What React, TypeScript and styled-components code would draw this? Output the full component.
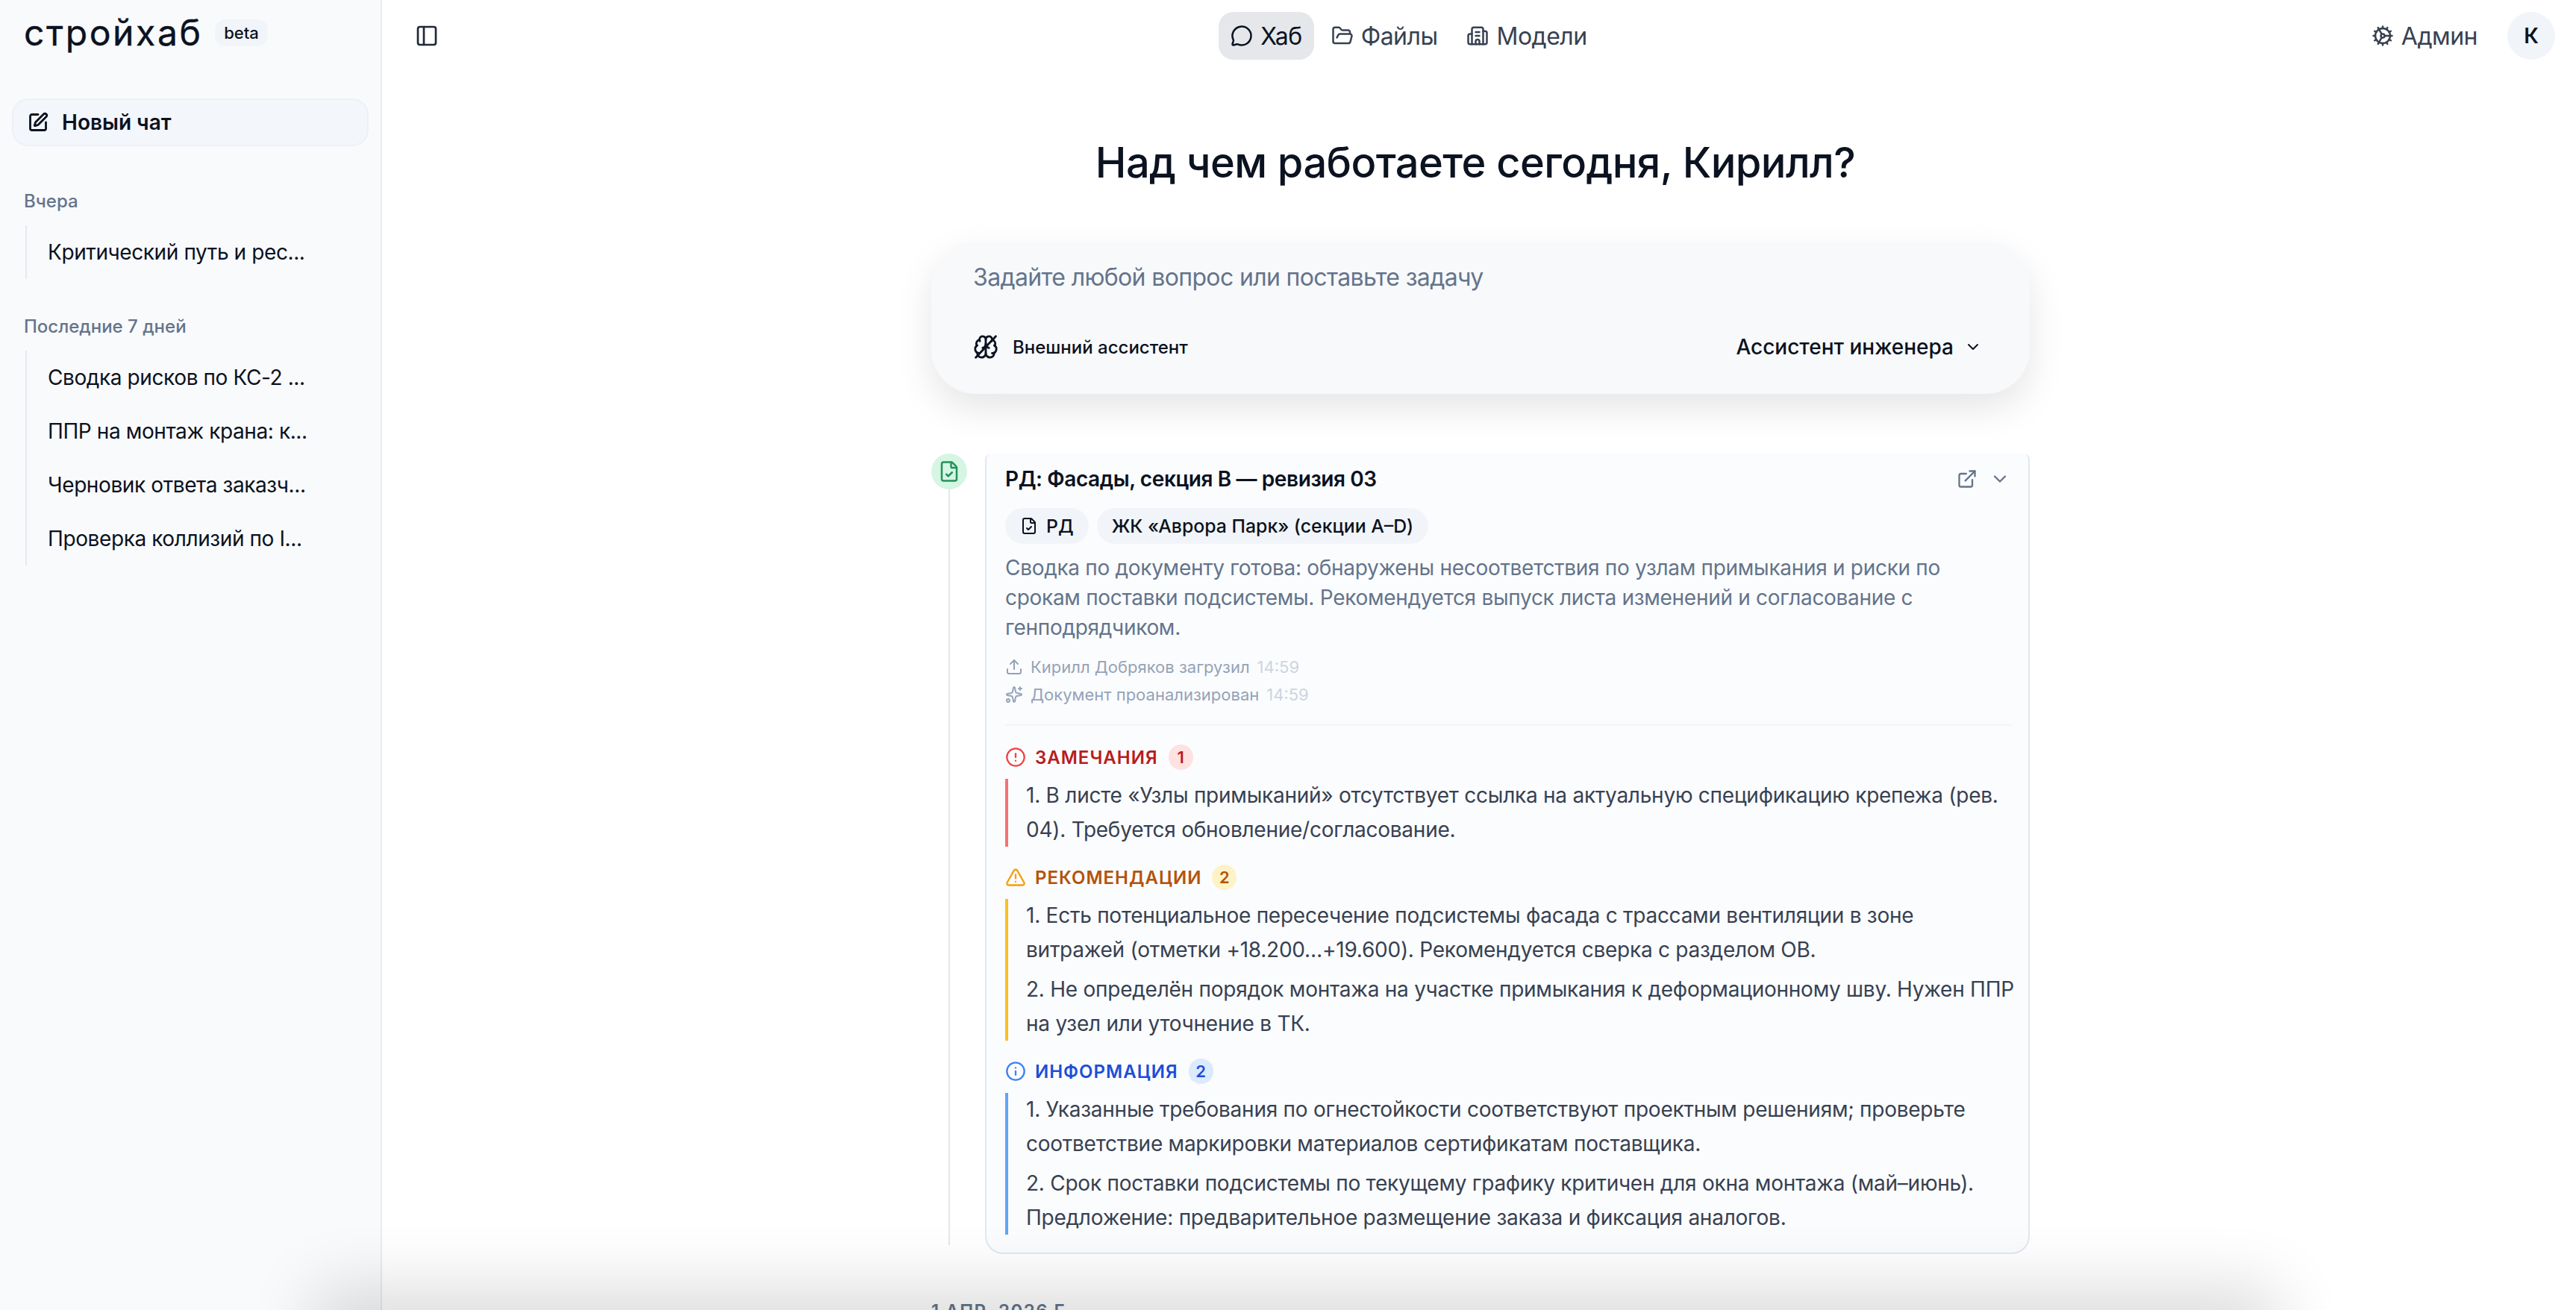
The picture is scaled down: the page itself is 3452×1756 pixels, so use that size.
import React from "react";
import styled, { createGlobalStyle } from "styled-components";
import {
  Brain,
  ChevronDown,
  CircleAlert,
  Cog,
  ExternalLink,
  FileCheck,
  FolderOpen,
  Building2,
  Info,
  MessageCircle,
  PanelLeft,
  Sparkles,
  SquarePen,
  TriangleAlert,
  Upload,
} from "lucide-react";

const GlobalStyle = createGlobalStyle`
  html, body {
    margin: 0;
    height: 100%;
    overflow: hidden;
    background: #fff;
    font-family: Inter, "Noto Sans", sans-serif;
    color: #0b1220;
  }
  * { box-sizing: border-box; }
`;

type Tone = "red" | "amber" | "blue";

const tones: Record<Tone, { title: string; icon: string; badge: string; bar: string }> = {
  red: { title: "#b91c1c", icon: "#ef4444", badge: "#fee2e2", bar: "#f87171" },
  amber: { title: "#b45309", icon: "#f59e0b", badge: "#fef3c7", bar: "#fbbf24" },
  blue: { title: "#1d4ed8", icon: "#3b82f6", badge: "#dbeafe", bar: "#60a5fa" },
};

const historyGroups = [
  { label: "Вчера", items: ["Критический путь и рес..."] },
  {
    label: "Последние 7 дней",
    items: ["Сводка рисков по КС-2 ...", "ППР на монтаж крана: к...", "Черновик ответа заказч...", "Проверка коллизий по I..."],
  },
];

const sections: { tone: Tone; title: string; items: string[] }[] = [
  {
    tone: "red",
    title: "Замечания",
    items: [
      "1. В листе «Узлы примыканий» отсутствует ссылка на актуальную спецификацию крепежа (рев. 04). Требуется обновление/согласование.",
    ],
  },
  {
    tone: "amber",
    title: "Рекомендации",
    items: [
      "1. Есть потенциальное пересечение подсистемы фасада с трассами вентиляции в зоне витражей (отметки +18.200…+19.600). Рекомендуется сверка с разделом ОВ.",
      "2. Не определён порядок монтажа на участке примыкания к деформационному шву. Нужен ППР на узел или уточнение в ТК.",
    ],
  },
  {
    tone: "blue",
    title: "Информация",
    items: [
      "1. Указанные требования по огнестойкости соответствуют проектным решениям; проверьте соответствие маркировки материалов сертификатам поставщика.",
      "2. Срок поставки подсистемы по текущему графику критичен для окна монтажа (май–июнь). Предложение: предварительное размещение заказа и фиксация аналогов.",
    ],
  },
];

const sectionIcons = { red: CircleAlert, amber: TriangleAlert, blue: Info };

const BrainSlash = () => (
  <svg width="34" height="34" viewBox="0 0 24 24" fill="none" stroke="currentColor" strokeWidth="2" strokeLinecap="round">
    <Brain size={24} />
    <line x1="2.5" y1="22" x2="21.5" y2="2" />
  </svg>
);

export default function App() {
  return (
    <>
      <GlobalStyle />
      <Page>
        <Sidebar>
          <LogoRow>
            <Logo>стройхаб</Logo>
            <Beta>beta</Beta>
          </LogoRow>
          <NewChat>
            <SquarePen size={28} strokeWidth={2.4} />
            Новый чат
          </NewChat>
          {historyGroups.map((group) => (
            <HistoryGroup key={group.label}>
              <GroupLabel>{group.label}</GroupLabel>
              <HistoryList>
                {group.items.map((item) => (
                  <HistoryItem key={item}>{item}</HistoryItem>
                ))}
              </HistoryList>
            </HistoryGroup>
          ))}
        </Sidebar>
        <Main>
          <TopBar>
            <PanelButton>
              <PanelLeft size={32} />
            </PanelButton>
            <Nav>
              <NavLink $active>
                <MessageCircle size={32} />
                Хаб
              </NavLink>
              <NavLink>
                <FolderOpen size={32} />
                Файлы
              </NavLink>
              <NavLink>
                <Building2 size={32} />
                Модели
              </NavLink>
            </Nav>
            <UserArea>
              <NavLink>
                <Cog size={32} />
                Админ
              </NavLink>
              <Avatar>К</Avatar>
            </UserArea>
          </TopBar>
          <Heading>Над чем работаете сегодня, Кирилл?</Heading>
          <Column>
            <Composer>
              <Placeholder>Задайте любой вопрос или поставьте задачу</Placeholder>
              <ComposerRow>
                <ExternalToggle>
                  <BrainSlash />
                  Внешний ассистент
                </ExternalToggle>
                <ModelSelect>
                  Ассистент инженера
                  <ChevronDown size={24} />
                </ModelSelect>
              </ComposerRow>
            </Composer>
            <Feed>
              <Timeline>
                <TimelineDot>
                  <FileCheck size={30} />
                </TimelineDot>
                <TimelineLine />
              </Timeline>
              <Card>
                <CardHead>
                  <CardTitle>РД: Фасады, секция В — ревизия 03</CardTitle>
                  <CardActions>
                    <ExternalLink size={28} />
                    <ChevronDown size={28} />
                  </CardActions>
                </CardHead>
                <Chips>
                  <Chip>
                    <FileCheck size={24} />
                    РД
                  </Chip>
                  <Chip>ЖК «Аврора Парк» (секции A–D)</Chip>
                </Chips>
                <Summary>
                  Сводка по документу готова: обнаружены несоответствия по узлам примыкания и риски по срокам поставки
                  подсистемы. Рекомендуется выпуск листа изменений и согласование с генподрядчиком.
                </Summary>
                <MetaList>
                  <MetaRow>
                    <Upload size={24} />
                    Кирилл Добряков загрузил <MetaTime>14:59</MetaTime>
                  </MetaRow>
                  <MetaRow>
                    <Sparkles size={24} />
                    Документ проанализирован <MetaTime>14:59</MetaTime>
                  </MetaRow>
                </MetaList>
                <Divider />
                {sections.map((section) => {
                  const Icon = sectionIcons[section.tone];
                  return (
                    <Section key={section.title}>
                      <SectionHead $tone={section.tone}>
                        <Icon size={28} />
                        <SectionTitle>{section.title}</SectionTitle>
                        <Badge>{section.items.length}</Badge>
                      </SectionHead>
                      <SectionBody $tone={section.tone}>
                        {section.items.map((text) => (
                          <p key={text}>{text}</p>
                        ))}
                      </SectionBody>
                    </Section>
                  );
                })}
              </Card>
            </Feed>
            <DateLabel>1 апр. 2026 г.</DateLabel>
          </Column>
        </Main>
        <BottomShade />
      </Page>
    </>
  );
}

const Page = styled.div`
  display: flex;
  height: 1756px;
  overflow: hidden;
  position: relative;
`;

const Sidebar = styled.aside`
  width: 512px;
  flex: none;
  background: #f9fafc;
  border-right: 2px solid #e8ecf3;
  padding: 26px 16px 0;
`;

const LogoRow = styled.div`
  display: flex;
  align-items: center;
  gap: 16px;
  height: 36px;
  padding-left: 16px;
`;

const Logo = styled.div`
  font-size: 48px;
  line-height: 36px;
  width: 240px;
  flex: none;
  color: #0b1220;
  letter-spacing: 2.6px;
  -webkit-text-stroke: 0.4px #0b1220;
`;

const Beta = styled.span`
  display: inline-flex;
  align-items: center;
  justify-content: center;
  width: 71px;
  height: 36px;
  border-radius: 14px;
  background: #f1f5f9;
  font-size: 22px;
  font-weight: 500;
`;

const NewChat = styled.div`
  display: flex;
  align-items: center;
  gap: 18px;
  height: 64px;
  margin: 70px 0 0;
  width: 478px;
  padding: 0 19px;
  border: 2px solid #edf0f6;
  border-radius: 22px;
  background: #f3f6fb;
  font-size: 28px;
  font-weight: 600;
`;

const HistoryGroup = styled.div`
  padding-left: 16px;
  margin-top: 58px;
  & + & {
    margin-top: 48px;
  }
`;

const GroupLabel = styled.div`
  font-size: 24px;
  font-weight: 500;
  line-height: 32px;
  color: #64748b;
`;

const HistoryList = styled.div`
  margin: 16px 0 0 2px;
  border-left: 2px solid #e5e9f0;
`;

const HistoryItem = styled.div`
  height: 72px;
  display: flex;
  align-items: center;
  padding-left: 28px;
  font-size: 28px;
  letter-spacing: -0.4px;
  white-space: nowrap;
  color: #0b1220;
`;

const Main = styled.main`
  flex: 1;
  min-width: 0;
  display: flex;
  flex-direction: column;
  align-items: center;
  overflow: hidden;
  padding-left: 4px;
`;

const TopBar = styled.header`
  align-self: stretch;
  margin-left: -4px;
  display: flex;
  align-items: center;
  justify-content: space-between;
  height: 96px;
  flex: none;
  padding: 0 28px 0 32px;
`;

const PanelButton = styled.div`
  width: 70px;
  padding-left: 12px;
  display: flex;
  color: #1f2937;
`;

const Nav = styled.nav`
  display: flex;
  align-items: center;
  gap: 7px;
`;

const NavLink = styled.div<{ $active?: boolean }>`
  display: flex;
  align-items: center;
  gap: 10px;
  height: 64px;
  padding: 0 16px;
  border-radius: 20px;
  font-size: 32px;
  letter-spacing: -0.5px;
  color: ${(p) => (p.$active ? "#0b1220" : "#374151")};
  background: ${(p) => (p.$active ? "#e5e7eb" : "transparent")};
  svg {
    width: 30px;
    height: 30px;
  }
`;

const UserArea = styled.div`
  display: flex;
  align-items: center;
  gap: 24px;
`;

const Avatar = styled.div`
  width: 64px;
  height: 64px;
  border-radius: 50%;
  background: #f1f5f9;
  display: flex;
  align-items: center;
  justify-content: center;
  font-size: 28px;
  font-weight: 600;
`;

const Heading = styled.h1`
  margin: 86px 14px 0 0;
  font-size: 56px;
  line-height: 72px;
  font-weight: 500;
  letter-spacing: -0.6px;
  color: #0b1220;
  flex: none;
`;

const Column = styled.div`
  width: 1472px;
  flex: none;
  margin-top: 70px;
`;

const Composer = styled.div`
  height: 204px;
  border-radius: 60px;
  background: #f8f9fb;
  box-shadow: 0 20px 50px rgba(0, 0, 0, 0.1);
  padding: 26px 64px 0 56px;
`;

const Placeholder = styled.div`
  font-size: 32px;
  line-height: 44px;
  letter-spacing: -0.64px;
  color: #64748b;
`;

const ComposerRow = styled.div`
  display: flex;
  align-items: center;
  justify-content: space-between;
  margin-top: 54px;
`;

const ExternalToggle = styled.div`
  display: flex;
  align-items: center;
  gap: 19px;
  font-size: 24px;
  font-weight: 500;
`;

const ModelSelect = styled.div`
  display: flex;
  align-items: center;
  gap: 14px;
  font-size: 28px;
  font-weight: 500;
`;

const Feed = styled.div`
  display: flex;
  gap: 24px;
  margin-top: 80px;
`;

const Timeline = styled.div`
  width: 48px;
  flex: none;
  display: flex;
  flex-direction: column;
  align-items: center;
  padding-bottom: 12px;
`;

const TimelineDot = styled.div`
  width: 48px;
  height: 48px;
  border-radius: 50%;
  background: #d6f5e3;
  color: #22945b;
  display: flex;
  align-items: center;
  justify-content: center;
`;

const TimelineLine = styled.div`
  flex: 1;
  width: 2px;
  background: #e2e8f0;
`;

const Card = styled.article`
  flex: 1;
  min-width: 0;
  background: #fbfcfe;
  border: 2px solid #e2e8f0;
  border-top: 0;
  border-radius: 8px 8px 24px 24px;
  padding: 16px 16px 24px 25px;
`;

const CardHead = styled.div`
  display: flex;
  align-items: center;
  justify-content: space-between;
  height: 36px;
`;

const CardTitle = styled.div`
  font-size: 28px;
  font-weight: 600;
  letter-spacing: -0.4px;
`;

const CardActions = styled.div`
  display: flex;
  align-items: center;
  gap: 16px;
  margin-right: 8px;
  color: #64748b;
`;

const Chips = styled.div`
  display: flex;
  gap: 11px;
  margin-top: 21px;
`;

const Chip = styled.div`
  display: flex;
  align-items: center;
  gap: 11px;
  height: 48px;
  padding: 0 20px;
  border-radius: 24px;
  background: #f1f5f9;
  font-size: 24.8px;
  font-weight: 500;
`;

const Summary = styled.p`
  margin: 12px 8px 0 0;
  font-size: 28px;
  line-height: 40px;
  letter-spacing: -0.3px;
  color: #64748b;
`;

const MetaList = styled.div`
  margin-top: 14px;
`;

const MetaRow = styled.div`
  display: flex;
  align-items: center;
  gap: 10px;
  height: 37px;
  font-size: 22px;
  color: #94a3b8;
  svg {
    flex: none;
  }
`;

const MetaTime = styled.span`
  color: #cbd5e1;
`;

const Divider = styled.div`
  height: 2px;
  background: #f1f5f9;
  margin: 22px 6px 25px 0;
`;

const Section = styled.section`
  & + & {
    margin-top: 24px;
  }
`;

const SectionHead = styled.div<{ $tone: Tone }>`
  display: flex;
  align-items: center;
  height: 34px;
  color: ${(p) => tones[p.$tone].title};
  & > svg {
    color: ${(p) => tones[p.$tone].icon};
    margin-right: 12px;
  }
  & > span:last-child {
    background: ${(p) => tones[p.$tone].badge};
  }
`;

const SectionTitle = styled.span`
  font-size: 24px;
  font-weight: 600;
  letter-spacing: 1px;
  text-transform: uppercase;
`;

const Badge = styled.span`
  margin-left: 14px;
  min-width: 33px;
  height: 34px;
  border-radius: 17px;
  display: flex;
  align-items: center;
  justify-content: center;
  font-size: 22px;
  font-weight: 600;
`;

const SectionBody = styled.div<{ $tone: Tone }>`
  margin-top: 12px;
  border-left: 4px solid ${(p) => tones[p.$tone].bar};
  padding-left: 24px;
  display: flex;
  flex-direction: column;
  gap: 8px;
  p {
    margin: 0;
    font-size: 28px;
    line-height: 45.5px;
    letter-spacing: -0.25px;
    color: #374151;
  }
`;

const DateLabel = styled.div`
  margin-top: 62px;
  font-size: 24px;
  font-weight: 600;
  letter-spacing: 1.5px;
  text-transform: uppercase;
  color: #64748b;
`;

const BottomShade = styled.div`
  position: absolute;
  top: 100%;
  left: 452px;
  right: 430px;
  height: 60px;
  box-shadow: 0 0 90px 30px rgba(0, 0, 0, 0.14);
`;
